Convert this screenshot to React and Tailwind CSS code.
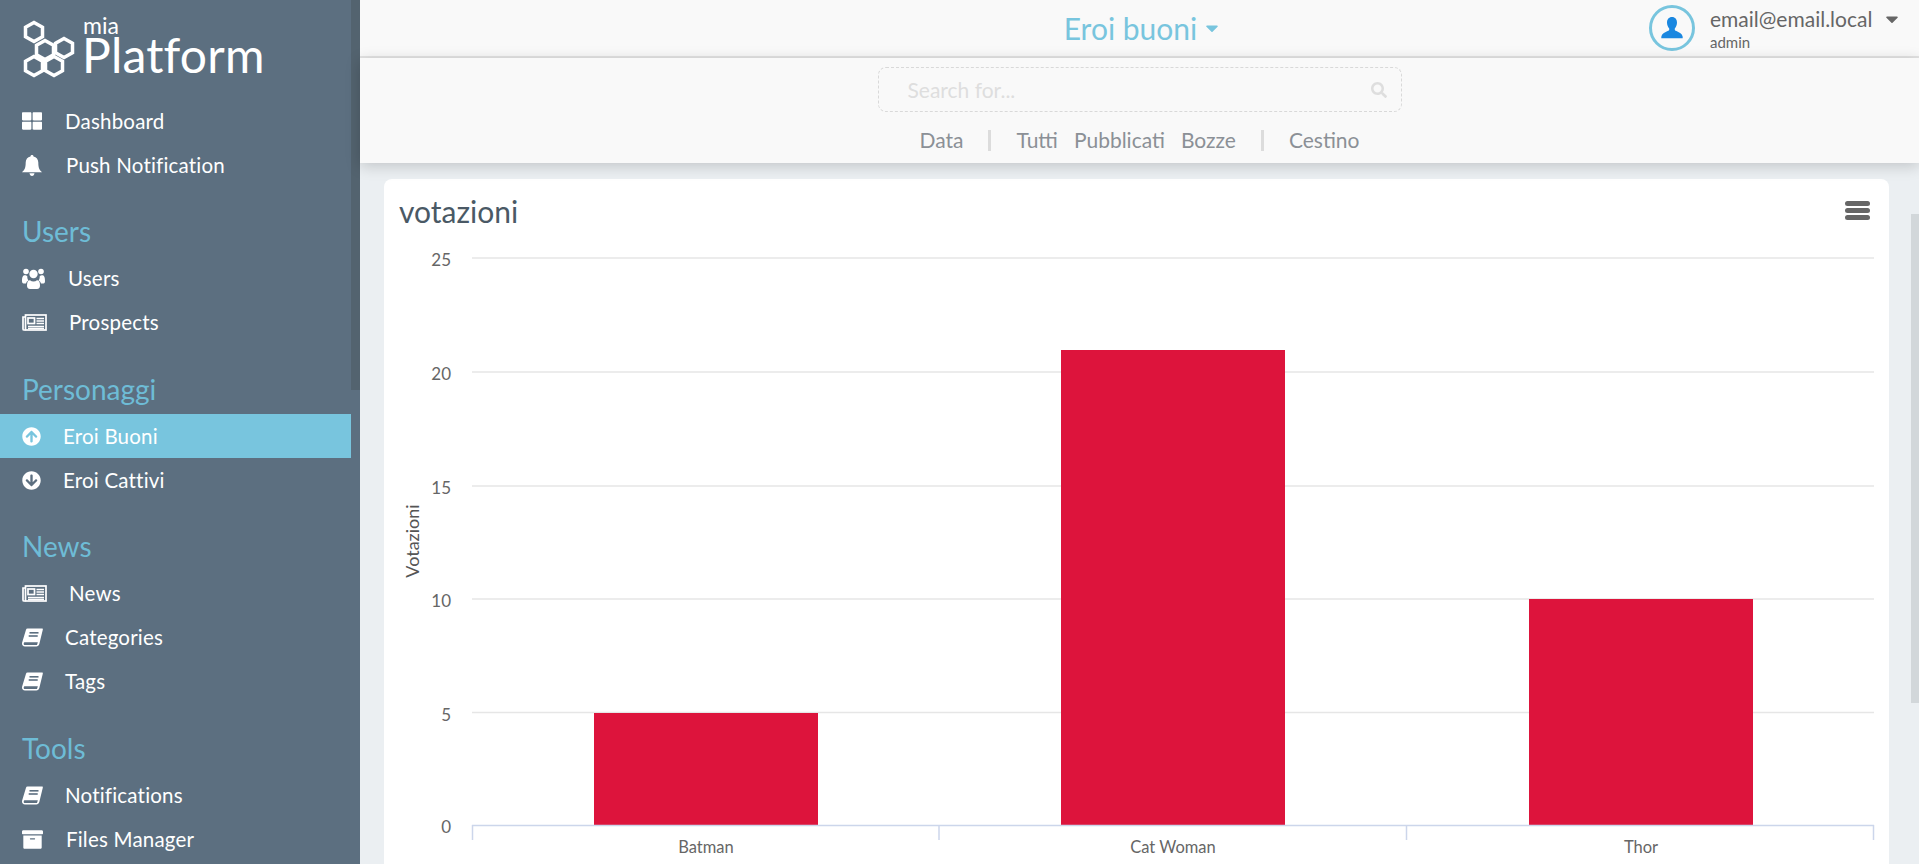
import { FaThLarge, FaArchive, FaArrowCircleUp, FaArrowCircleDown, FaSearch, FaCaretDown } from 'react-icons/fa'

const font = { fontFamily: 'Lato, sans-serif' }

function BellIcon() {
  return (
    <svg width="20" height="21" viewBox="0 0 20 21" fill="white">
      <path d="M10 0c.9 0 1.500.6 1.500 1.400 3 .6 4.800 3 4.800 6.100 0 5 1 7.500 3.700 9.700H0c2.700-2.200 3.700-4.700 3.700-9.700 0-3.100 1.800-5.500 4.800-6.100C8.500.6 9.100 0 10 0z" />
      <path d="M7.500 18.200h5C12.300 19.700 11.300 21 10 21s-2.300-1.300-2.500-2.800z" />
    </svg>
  )
}

function UsersIcon() {
  return (
    <svg width="23" height="21" viewBox="0 0 23 21" fill="white">
      <circle cx="4" cy="3.500" r="2.800" />
      <circle cx="19" cy="3.500" r="2.800" />
      <circle cx="11.500" cy="6" r="4.200" />
      <path d="M0 13c0-4 .8-5.800 3-5.800 1 0 1.800.5 2.400 1.200-.4 1.200.3 3 1 4-1 .4-2 1.500-2.400 3H1.500C.5 15.400 0 14.500 0 13z" />
      <path d="M23 13c0-4-.8-5.800-3-5.800-1 0-1.800.5-2.400 1.200.4 1.200-.3 3-1 4 1 .4 2 1.500 2.400 3h2.500c1 0 1.500-.9 1.500-2.400z" />
      <path d="M5 17.500c0-3.500 1-5.200 3-5.200 1 .8 2.200 1.200 3.500 1.200s2.500-.4 3.500-1.200c2 0 3 1.700 3 5.200 0 2-1 3.500-3 3.500H8c-2 0-3-1.500-3-3.500z" />
    </svg>
  )
}

function PersonIcon() {
  return (
    <svg width="22" height="22" viewBox="0 0 22 22" fill="#1a87e0">
      <path d="M11 0c3.200 0 5 2.400 5 5.600 0 2.400-.9 4.600-2.200 5.800-.3 1.500.3 2 1.600 2.600 2.400 1.100 5.400 2.500 6.100 5.100.2.700.2 1.400.2 2.100H.3c0-.7 0-1.400.2-2.100.7-2.600 3.700-4 6.100-5.100 1.300-.6 1.900-1.100 1.600-2.600C6.900 10.200 6 8 6 5.600 6 2.400 7.800 0 11 0z" />
    </svg>
  )
}

function NewspaperIcon() {
  return (
    <svg width="25" height="17" viewBox="0 0 25 17" fill="none" stroke="white" strokeWidth="1.700">
      <rect x="3.500" y="1" width="20.500" height="15" />
      <path d="M3.500 3H1v12c0 .6.4 1 1 1h1.500" />
      <rect x="6" y="4" width="6.500" height="5.500" />
      <path d="M14.500 4.500H22M14.500 7H22M14.500 9.500H22M6 12.500H22M6 14.500H22" />
    </svg>
  )
}

function BookIcon() {
  return (
    <svg width="21" height="19" viewBox="0 0 21 19" fill="white">
      <path d="M5.500 0.500H20c.7 0 1 .5.8 1.200L17.300 16c-.4 1.600-1.400 2.500-3 2.500H3C1 18.500 0 17.300 0 15.600c0-.5.1-1 .3-1.500L4 1.700C4.200.9 4.700.5 5.500.5z" />
      <path d="M2.800 14.200h13c-.3 1.300-.6 2.600-1 2.800H3c-1 0-1.300-.5-1.300-1.300 0-.8.4-1.500 1.100-1.500z" fill="#5c6f80" />
      <rect x="7.500" y="4" width="9" height="1.600" fill="#5c6f80" />
      <rect x="6.700" y="7.200" width="9" height="1.600" fill="#5c6f80" />
    </svg>
  )
}

function Logo() {
  const hexes = [[34, 32], [45, 50], [64, 48], [34, 66], [54, 66]]
  return (
    <div className="h-[99px] shrink-0 flex">
      <svg width="80" height="80" viewBox="0 0 80 80" className="shrink-0" fill="none" stroke="white" strokeWidth="3.500">
        {hexes.map(([x, y]) => (
          <polygon key={`${x}-${y}`} points={`${x},${y - 9.500} ${x + 8.500},${y - 4.700} ${x + 8.500},${y + 4.700} ${x},${y + 9.500} ${x - 8.500},${y + 4.700} ${x - 8.500},${y - 4.700}`} />
        ))}
      </svg>
      <div className="pt-[15px] pl-[3px] flex flex-col text-white">
        <span className="text-[23px] leading-[20px]">mia</span>
        <span className="-ml-[1px] text-[48px] leading-[40px] tracking-[0.2px]">Platform</span>
      </div>
    </div>
  )
}

function NavItem({ icon, slot, label, active }) {
  return (
    <div className={`h-[44px] flex items-center pl-[22px] text-[20.500px] tracking-[0.200px] text-white ${active ? 'bg-[#78c5de]' : ''}`}>
      <div className={`${slot} shrink-0 flex items-center`}>{icon}</div>
      <span>{label}</span>
    </div>
  )
}

function SectionTitle({ children }) {
  return <div className="h-[69.500px] pl-[22px] pt-[27px] text-[28px] leading-[34px] text-[#6ebcd6]">{children}</div>
}

function Sidebar() {
  return (
    <aside className="w-[360px] shrink-0 h-full bg-[#5c6f80] relative overflow-hidden">
      <div className="w-[351px] flex flex-col">
        <Logo />
        <NavItem icon={<FaThLarge size={20} color="white" />} slot="w-[43px]" label="Dashboard" />
        <NavItem icon={<BellIcon />} slot="w-[44px]" label="Push Notification" />
        <SectionTitle>Users</SectionTitle>
        <NavItem icon={<UsersIcon />} slot="w-[46px]" label="Users" />
        <NavItem icon={<NewspaperIcon />} slot="w-[47px]" label="Prospects" />
        <SectionTitle>Personaggi</SectionTitle>
        <NavItem active icon={<FaArrowCircleUp size={19} color="white" />} slot="w-[41px]" label="Eroi Buoni" />
        <NavItem icon={<FaArrowCircleDown size={19} color="white" />} slot="w-[41px]" label="Eroi Cattivi" />
        <SectionTitle>News</SectionTitle>
        <NavItem icon={<NewspaperIcon />} slot="w-[47px]" label="News" />
        <NavItem icon={<BookIcon />} slot="w-[43px]" label="Categories" />
        <NavItem icon={<BookIcon />} slot="w-[43px]" label="Tags" />
        <SectionTitle>Tools</SectionTitle>
        <NavItem icon={<BookIcon />} slot="w-[43px]" label="Notifications" />
        <NavItem icon={<FaArchive size={21} color="white" />} slot="w-[44px]" label="Files Manager" />
      </div>
      {/* scrollbar thumb */}
      <div className="absolute right-0 top-0 w-[9px] h-[390px] bg-[#53636f]" />
    </aside>
  )
}

function Header() {
  return (
    <header className="h-[58px] shrink-0 grid grid-cols-[1fr_auto_1fr] items-center border-b-2 border-[#e3e3e3] bg-[#f9f9f9]">
      <div />
      <div className="flex items-center gap-[5px] pl-[7px] text-[30px] text-[#78c5de]">
        <span>Eroi buoni</span>
        <FaCaretDown size={20} />
      </div>
      <div className="flex items-center justify-end pr-[17px]">
        <div className="w-[46px] h-[46px] rounded-full border-[3px] border-[#78c5de] flex items-center justify-center">
          <PersonIcon />
        </div>
        <div className="ml-[15px] flex flex-col">
          <div className="flex items-center text-[21px] leading-[28px] text-[#666]">
            <span className="w-[172px]">email@email.local</span>
            <FaCaretDown size={20} />
          </div>
          <span className="text-[15px] leading-[18px] text-[#666]">admin</span>
        </div>
      </div>
    </header>
  )
}

function FilterBar() {
  return (
    <div className="h-[105px] shrink-0 bg-[#f9f9f9] flex flex-col items-center shadow-[0_3px_14px_rgba(0,0,0,0.18)] relative">
      <div className="mt-[9px] w-[524px] h-[45px] border border-dashed border-[#d9d9d9] rounded-lg flex items-center justify-between pl-[29px] pr-[14px]">
        <span className="text-[21px] text-[#dedede]">Search for...</span>
        <FaSearch size={16} color="#dedede" />
      </div>
      <div className="mt-[16px] flex items-center text-[21px] leading-[24px] text-[#8b9096]">
        <span>Data</span>
        <span className="w-[3px] h-[21px] bg-[#dcdcdc] mx-[25px]" />
        <span>Tutti</span>
        <span className="ml-[16px]">Pubblicati</span>
        <span className="ml-[16px]">Bozze</span>
        <span className="w-[3px] h-[21px] bg-[#dcdcdc] mx-[25px]" />
        <span>Cestino</span>
      </div>
    </div>
  )
}

const ticks = [
  { label: '25', y: 258 },
  { label: '20', y: 372 },
  { label: '15', y: 486 },
  { label: '10', y: 599 },
  { label: '5', y: 712.500 },
  { label: '0', y: 825 },
]

const bars = [
  { label: 'Batman', x: 594, top: 713, cx: 706 },
  { label: 'Cat Woman', x: 1061, top: 350, cx: 1173 },
  { label: 'Thor', x: 1529, top: 599, cx: 1641 },
]

function Chart() {
  return (
    <svg width="1505" height="640" viewBox="384 245 1505 640" className="block" style={font}>
      {ticks.slice(0, 5).map((t) => (
        <line key={t.label} x1="472" x2="1874" y1={t.y} y2={t.y} stroke="#e6e6e6" strokeWidth="1.500" />
      ))}
      {ticks.map((t) => (
        <text key={t.label} x="451" y={t.y + 8} textAnchor="end" fontSize="17" fill="#666">{t.label}</text>
      ))}
      <text transform="translate(419 541) rotate(-90)" textAnchor="middle" fontSize="18" fill="#555">Votazioni</text>
      {bars.map((b) => (
        <rect key={b.label} x={b.x} y={b.top} width="224" height={825 - b.top} fill="#dd143c" />
      ))}
      <line x1="472" x2="1874" y1="825.500" y2="825.500" stroke="#ccd6eb" strokeWidth="1.500" />
      {[472.500, 939, 1406.500, 1873.500].map((x) => (
        <line key={x} x1={x} x2={x} y1="825" y2="840" stroke="#ccd6eb" strokeWidth="1.500" />
      ))}
      {bars.map((b) => (
        <text key={b.label} x={b.cx} y="853" textAnchor="middle" fontSize="16.500" fill="#666">{b.label}</text>
      ))}
    </svg>
  )
}

export default function App() {
  return (
    <div className="w-full h-[864px] flex overflow-hidden bg-[#ebeff2]" style={font}>
      <Sidebar />
      <main className="flex-1 min-w-0 flex flex-col relative">
        <Header />
        <FilterBar />
        <div className="flex-1 min-h-0 overflow-hidden pl-[24px] pr-[30px] pt-[16px]">
          <div className="bg-white rounded-lg">
            <div className="h-[66px] flex items-start justify-between pl-[15px] pr-[19px] pt-[14px]">
              <span className="text-[30px] leading-[36px] text-[#4a5965]">votazioni</span>
              <div className="mt-[8px] flex flex-col gap-[2px]">
                <span className="block w-[25px] h-[5px] rounded-sm bg-[#666]" />
                <span className="block w-[25px] h-[5px] rounded-sm bg-[#666]" />
                <span className="block w-[25px] h-[5px] rounded-sm bg-[#666]" />
              </div>
            </div>
            <Chart />
          </div>
        </div>
        {/* page scrollbar thumb */}
        <div className="absolute right-0 top-[214px] w-[8px] h-[489px] bg-[#d2d7da]" />
      </main>
    </div>
  )
}
